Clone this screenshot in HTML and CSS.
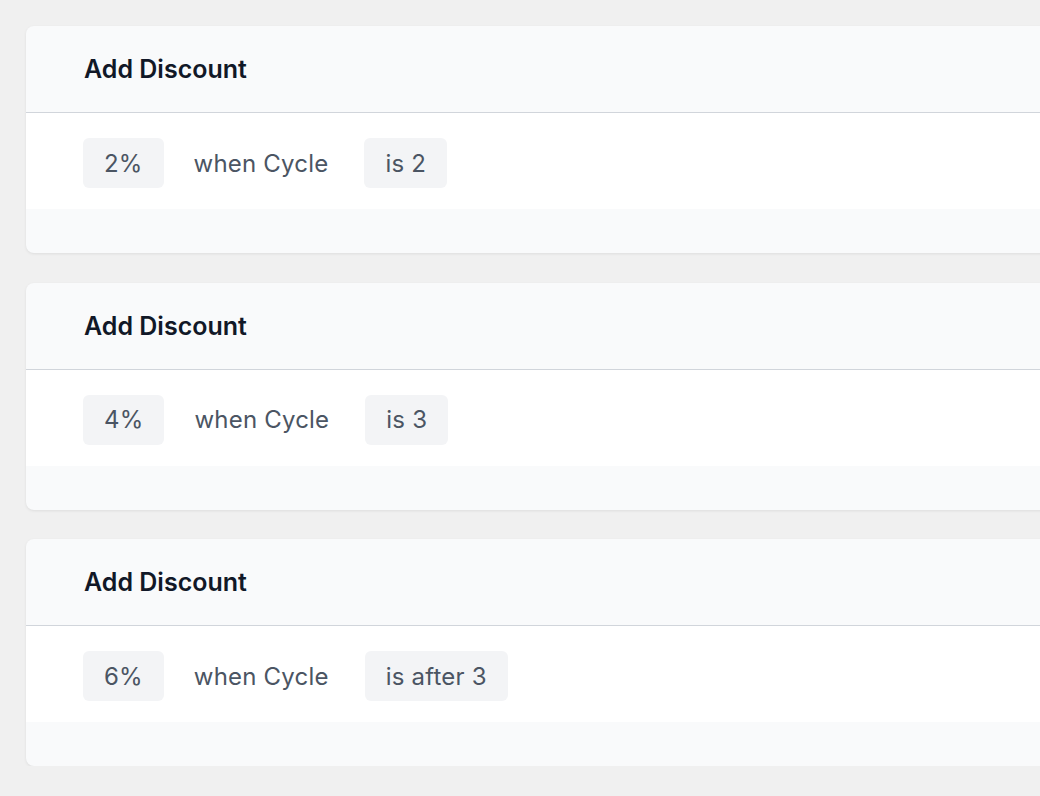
FILE: index.html
```html
<!DOCTYPE html>
<html lang="en">
<head>
  <meta charset="UTF-8" />
  <meta name="viewport" content="width=device-width, initial-scale=1.0"/>
  <title>Discounts</title>
  <link rel="stylesheet" href="styles.css">
</head>
<body>
<div class="discount-list">

  <div class="card">
    <div class="card-header">Add Discount</div>
    <div class="card-body">
      <span class="chip">2%</span>
      <span class="label">when Cycle</span>
      <span class="chip">is 2</span>
    </div>
    <div class="card-footer"></div>
  </div>

  <div class="card">
    <div class="card-header">Add Discount</div>
    <div class="card-body">
      <span class="chip">4%</span>
      <span class="label">when Cycle</span>
      <span class="chip">is 3</span>
    </div>
    <div class="card-footer"></div>
  </div>

  <div class="card">
    <div class="card-header">Add Discount</div>
    <div class="card-body">
      <span class="chip">6%</span>
      <span class="label">when Cycle</span>
      <span class="chip">is after 3</span>
    </div>
    <div class="card-footer"></div>
  </div>

</div>
</body>
</html>
```

FILE: styles.css
```css
body {
  margin: 0;
  background: #f0f0f0;
  font-family: Inter, "Noto Sans", sans-serif;
  overflow: hidden;
}
.discount-list {
  display: flex;
  flex-direction: column;
  gap: 29.5px;
  padding: 26px 0 0 26px;
  margin-right: -40px;
}
.card {
  background: #f9fafb;
  border-radius: 8px;
  box-shadow: 0 1px 3px rgba(0, 0, 0, 0.08);
  overflow: hidden;
}
.card-header {
  height: 86px;
  display: flex;
  align-items: center;
  padding-left: 58px;
  font-size: 25px;
  font-weight: 600;
  color: #111827;
  border-bottom: 1px solid #d1d5db;
}
.card-body {
  background: #fff;
  height: 96px;
  box-sizing: border-box;
  display: flex;
  align-items: flex-start;
  padding: 25px 0 0 57px;
  font-size: 24px;
  letter-spacing: 0.2px;
  color: #4b5563;
}
.chip {
  background: #f3f4f6;
  border-radius: 6px;
  padding: 0 21px;
  height: 50px;
  display: flex;
  align-items: center;
}
.label {
  height: 50px;
  display: flex;
  align-items: center;
  margin: 0 36px 0 30px;
}
.card-footer {
  height: 44px;
}
```
